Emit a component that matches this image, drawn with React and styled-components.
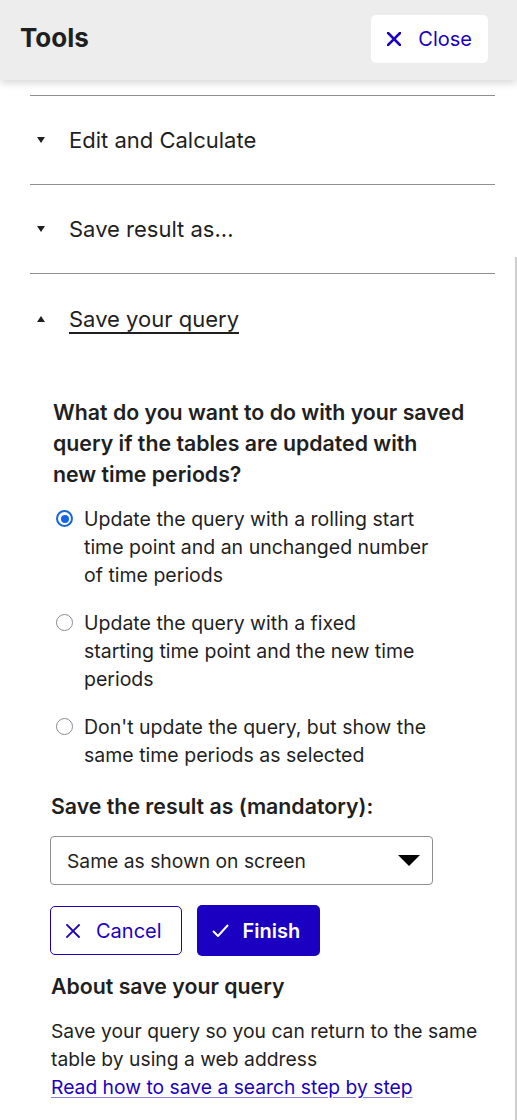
import React, { useState } from 'react';
import styled, { createGlobalStyle } from 'styled-components';

const GlobalStyle = createGlobalStyle`
  body {
    margin: 0;
    font-family: Inter, 'Liberation Sans', sans-serif;
    color: #1f1f1f;
    background: #ffffff;
  }
`;

const BLUE = '#1b00c2';

const Panel = styled.div`
  width: 517px;
  min-height: 1120px;
  display: flex;
  flex-direction: column;
`;

const Header = styled.header`
  height: 80px;
  box-sizing: border-box;
  display: flex;
  align-items: center;
  justify-content: space-between;
  padding: 0 29px 2px 20px;
  background: #ededed;
  box-shadow: 0 3px 8px rgba(0, 0, 0, 0.16);
  position: relative;
  z-index: 1;
`;

const Title = styled.h2`
  margin: 0 0 3px;
  font-size: 26px;
  font-weight: 700;
  color: #1f1f1f;
`;

const CloseButton = styled.button`
  height: 48px;
  display: flex;
  align-items: center;
  gap: 17px;
  padding: 0 16px;
  border: none;
  border-radius: 5px;
  background: #ffffff;
  color: ${BLUE};
  font-family: inherit;
  font-size: 20px;
  cursor: pointer;
`;

const Body = styled.div`
  position: relative;
  flex: 1;
  padding: 15px 22px 0 30px;
`;

const ScrollThumb = styled.div`
  position: absolute;
  right: 0;
  top: 177px;
  bottom: 0;
  width: 2px;
  background: #cfcfcf;
`;

const Item = styled.section`
  border-top: 1px solid #8f8f8f;
`;

const ItemHeader = styled.button`
  width: 100%;
  height: ${p => (p.$open ? '89px' : '88px')};
  display: flex;
  align-items: center;
  gap: 24px;
  padding: 0 0 0 7px;
  border: none;
  background: none;
  font-family: inherit;
  font-size: 22px;
  color: #1f1f1f;
  text-align: left;
  cursor: pointer;

  span {
    text-decoration: ${p => (p.$open ? 'underline' : 'none')};
    text-underline-offset: 5px;
    text-decoration-thickness: 1.5px;
  }
`;

const Content = styled.div`
  padding: 34px 0 40px 20px;
`;

const Question = styled.h3`
  margin: 0 0 15px 3px;
  font-size: 21.3px;
  line-height: 31px;
  font-weight: 600;
  max-width: 412.5px;
`;

const RadioList = styled.div`
  display: flex;
  flex-direction: column;
  gap: 20px;
  margin-bottom: 22px;
`;

const RadioRow = styled.label`
  display: flex;
  align-items: flex-start;
  gap: 11px;
  padding-left: 6px;
  font-size: 19.5px;
  line-height: 28px;
  cursor: pointer;

  span {
    max-width: 346px;
  }
`;

const RadioDot = styled.span`
  flex: none;
  width: 17px;
  height: 17px;
  margin-top: 5px;
  box-sizing: border-box;
  border-radius: 50%;
  border: ${p => (p.$checked ? '2px solid #1565e0' : '1.5px solid #8a8a96')};
  display: flex;
  align-items: center;
  justify-content: center;

  &::after {
    content: '';
    width: 8px;
    height: 8px;
    border-radius: 50%;
    background: ${p => (p.$checked ? '#1565e0' : 'transparent')};
  }
`;

const Label = styled.h3`
  margin: 0 0 14px 1px;
  font-size: 21.3px;
  line-height: 31px;
  font-weight: 600;
`;

const Select = styled.div`
  width: 383px;
  height: 49px;
  box-sizing: border-box;
  display: flex;
  align-items: center;
  justify-content: space-between;
  padding: 0 12px 0 16px;
  border: 1px solid #8f8f8f;
  border-radius: 4px;
  font-size: 19.3px;
  margin-bottom: 21px;
`;

const Buttons = styled.div`
  display: flex;
  gap: 15px;
  margin-bottom: 15px;
`;

const ActionButton = styled.button`
  height: ${p => (p.$primary ? '51px' : '49px')};
  margin-top: ${p => (p.$primary ? '-1px' : '0')};
  box-sizing: border-box;
  display: flex;
  align-items: center;
  gap: ${p => (p.$primary ? '14px' : '16px')};
  padding: 0 ${p => (p.$primary ? '20px' : '19px')} 0 15px;
  border: ${p => (p.$primary ? 'none' : `1.5px solid ${BLUE}`)};
  border-radius: 5px;
  background: ${p => (p.$primary ? BLUE : '#ffffff')};
  color: ${p => (p.$primary ? '#ffffff' : BLUE)};
  font-family: inherit;
  font-size: 20px;
  font-weight: ${p => (p.$primary ? 600 : 400)};
  cursor: pointer;
`;

const AboutTitle = styled.h3`
  margin: 0 0 15px 1px;
  font-size: 21.3px;
  line-height: 31px;
  font-weight: 600;
`;

const Text = styled.p`
  margin: 0 0 0 1px;
  font-size: 19.3px;
  line-height: 28px;
  max-width: 440px;
`;

const Link = styled.a`
  margin-left: 1px;
  font-size: 19.3px;
  line-height: 28px;
  color: ${BLUE};
  text-decoration: underline;
  text-decoration-color: #8c80e0;
  text-underline-offset: 3px;
`;

const Caret = ({ up }) => (
  <svg width="8" height="6" viewBox="0 0 8 6" aria-hidden="true">
    <path d={up ? 'M0 6 L4 0 L8 6 Z' : 'M0 0 L8 0 L4 6 Z'} fill="#1f1f1f" />
  </svg>
);

const XIcon = ({ size = 14, width = 2.4 }) => (
  <svg width={size} height={size} viewBox="0 0 14 14" aria-hidden="true">
    <path d="M1 1 L13 13 M13 1 L1 13" stroke="currentColor" strokeWidth={width} strokeLinecap="square" fill="none" />
  </svg>
);

const CheckIcon = () => (
  <svg width="17" height="13" viewBox="0 0 17 13" aria-hidden="true">
    <path d="M1 7 L6 12 L16 1" stroke="currentColor" strokeWidth="2" fill="none" />
  </svg>
);

const SelectArrow = () => (
  <svg width="22" height="11" viewBox="0 0 22 11" aria-hidden="true">
    <path d="M0 0 L22 0 L11 11 Z" fill="#000" />
  </svg>
);

const options = [
  'Update the query with a rolling start time point and an unchanged number of time periods',
  'Update the query with a fixed starting time point and the new time periods',
  "Don't update the query, but show the same time periods as selected",
];

const sections = ['Edit and Calculate', 'Save result as...', 'Save your query'];

const App = () => {
  const [choice, setChoice] = useState(0);

  return (
    <Panel>
      <GlobalStyle />
      <Header>
        <Title>Tools</Title>
        <CloseButton>
          <XIcon size={14} width={2.6} />
          Close
        </CloseButton>
      </Header>
      <Body>
        <ScrollThumb />
        {sections.map((name, i) => {
          const open = i === sections.length - 1;
          return (
            <Item key={name}>
              <ItemHeader $open={open}>
                <Caret up={open} />
                <span>{name}</span>
              </ItemHeader>
              {open && (
                <Content>
                  <Question>
                    What do you want to do with your saved query if the tables are updated with new time periods?
                  </Question>
                  <RadioList>
                    {options.map((text, idx) => (
                      <RadioRow key={idx} onClick={() => setChoice(idx)}>
                        <RadioDot $checked={choice === idx} />
                        <span>{text}</span>
                      </RadioRow>
                    ))}
                  </RadioList>
                  <Label>Save the result as (mandatory):</Label>
                  <Select>
                    <span>Same as shown on screen</span>
                    <SelectArrow />
                  </Select>
                  <Buttons>
                    <ActionButton>
                      <XIcon size={14} width={1.8} />
                      Cancel
                    </ActionButton>
                    <ActionButton $primary>
                      <CheckIcon />
                      Finish
                    </ActionButton>
                  </Buttons>
                  <AboutTitle>About save your query</AboutTitle>
                  <Text>Save your query so you can return to the same table by using a web address</Text>
                  <Link href="#">Read how to save a search step by step</Link>
                </Content>
              )}
            </Item>
          );
        })}
      </Body>
    </Panel>
  );
};

export default App;
